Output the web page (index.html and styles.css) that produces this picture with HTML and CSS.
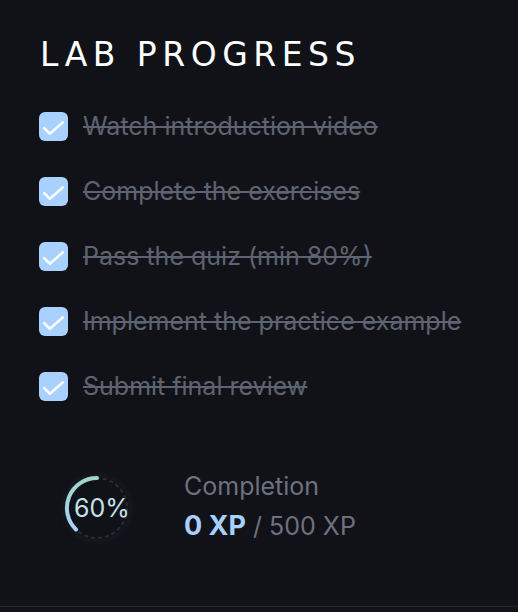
FILE: index.html
```html
<!DOCTYPE html>
<html>
<head>
<meta charset="utf-8">
<link rel="stylesheet" href="styles.css">
</head>
<body>
<section class="panel">
  <h1 class="title">LAB PROGRESS</h1>
  <ul class="tasks">
    <li class="task"><span class="box"><svg viewBox="0 0 28 28"><path d="M5 15.5l5.5 5.5L23 10" /></svg></span><span class="label">Watch introduction video</span></li>
    <li class="task"><span class="box"><svg viewBox="0 0 28 28"><path d="M5 15.5l5.5 5.5L23 10" /></svg></span><span class="label">Complete the exercises</span></li>
    <li class="task"><span class="box"><svg viewBox="0 0 28 28"><path d="M5 15.5l5.5 5.5L23 10" /></svg></span><span class="label">Pass the quiz (min 80%)</span></li>
    <li class="task"><span class="box"><svg viewBox="0 0 28 28"><path d="M5 15.5l5.5 5.5L23 10" /></svg></span><span class="label">Implement the practice example</span></li>
    <li class="task"><span class="box"><svg viewBox="0 0 28 28"><path d="M5 15.5l5.5 5.5L23 10" /></svg></span><span class="label">Submit final review</span></li>
  </ul>
  <div class="summary">
    <div class="ring">
      <svg viewBox="0 0 64 64">
        <defs>
          <linearGradient id="g" x1="0" y1="0" x2="0" y2="1">
            <stop offset="0" stop-color="#9fd6c6"/>
            <stop offset="1" stop-color="#a9d0fb"/>
          </linearGradient>
        </defs>
        <circle class="track" cx="32" cy="32" r="30"/>
        <path class="arc" d="M32 2 A30 30 0 0 0 11 53.5" stroke="url(#g)"/>
      </svg>
      <span class="pct">60%</span>
    </div>
    <div class="stats">
      <div class="caption">Completion</div>
      <div class="xp"><strong>0 XP</strong> / 500 XP</div>
    </div>
  </div>
</section>
<div class="next"></div>
</body>
</html>
```
FILE: styles.css
```css
* { box-sizing: border-box; }
html, body { margin: 0; padding: 0; }
body {
  background: #121219;
  font-family: Inter, "Noto Sans", sans-serif;
}
.panel {
  height: 607px;
  background: #111217;
  border-bottom: 1px solid #262634;
  padding: 36px 40px 0 39px;
}
.title {
  margin: 0 0 0 1px;
  font-family: "DejaVu Sans", sans-serif;
  font-weight: normal;
  font-size: 33px;
  line-height: 38px;
  letter-spacing: 5.5px;
  color: #ffffff;
}
.tasks {
  list-style: none;
  margin: 38px 0 0;
  padding: 0;
  display: flex;
  flex-direction: column;
  gap: 37px;
}
.task {
  display: flex;
  align-items: center;
  gap: 15px;
  height: 28px;
}
.box {
  width: 29px;
  height: 29px;
  border-radius: 6px;
  background: #a8d1ff;
  display: flex;
  flex: none;
}
.box svg {
  width: 29px;
  height: 29px;
  fill: none;
  stroke: #ffffff;
  stroke-width: 2.4;
  stroke-linecap: round;
  stroke-linejoin: round;
}
.label {
  font-size: 25px;
  color: #5d6371;
  text-decoration: line-through;
  text-decoration-thickness: 2px;
  white-space: nowrap;
}
.summary {
  margin: 73px 0 0 26px;
  display: flex;
  align-items: center;
  gap: 55px;
}
.ring {
  position: relative;
  width: 64px;
  height: 64px;
  flex: none;
  border-radius: 50%;
  box-shadow: 0 0 10px rgba(120, 140, 180, 0.12);
}
.ring svg {
  width: 64px;
  height: 64px;
  display: block;
  overflow: visible;
}
.track {
  fill: none;
  stroke: #262c3a;
  stroke-width: 2;
  stroke-dasharray: 4 3;
}
.arc {
  fill: none;
  stroke-width: 4;
  stroke-linecap: round;
}
.pct {
  position: absolute;
  left: 9px;
  top: 0;
  height: 64px;
  width: 64px;
  display: flex;
  align-items: center;
  font-size: 25px;
  color: #c4e2ec;
}
.stats {
  display: flex;
  flex-direction: column;
  gap: 9px;
  margin-top: -2px;
}
.caption {
  font-size: 25px;
  line-height: 30px;
  color: #6c7180;
}
.xp {
  font-size: 25px;
  line-height: 32px;
  color: #6c7180;
}
.xp strong {
  font-size: 27px;
  font-weight: 700;
  color: #a8cffd;
}
```
